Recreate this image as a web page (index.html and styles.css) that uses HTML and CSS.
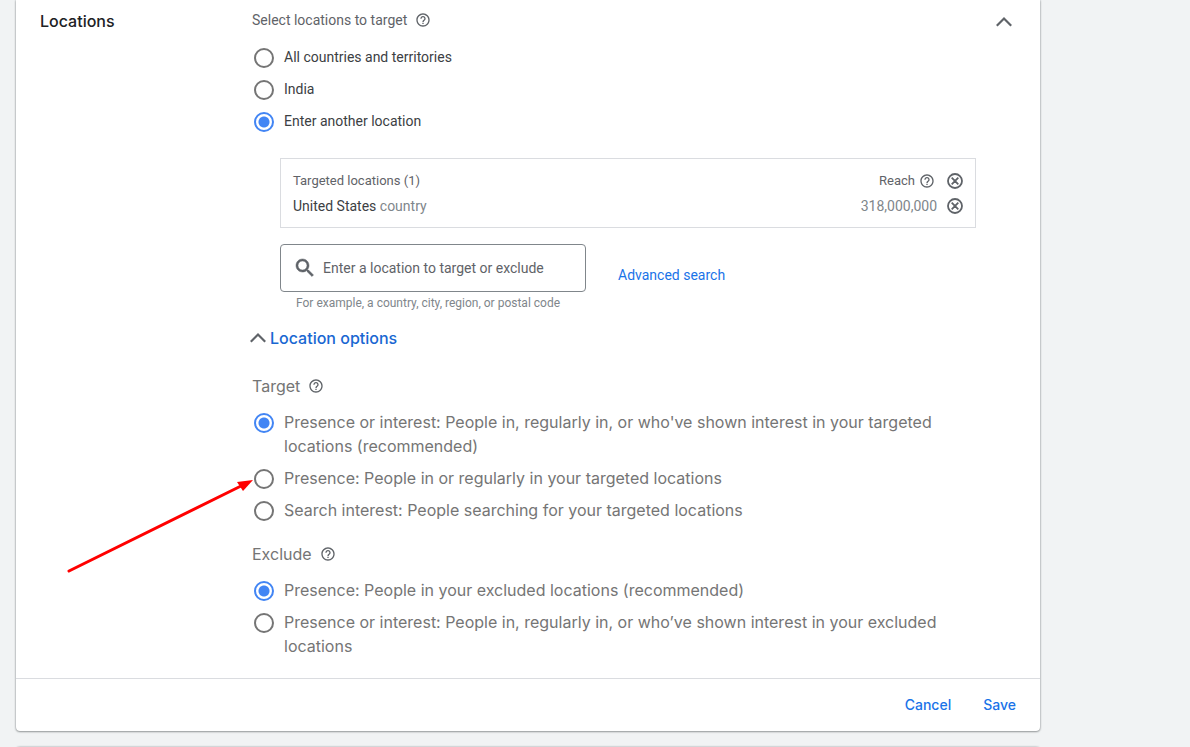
FILE: index.html
```html
<!DOCTYPE html>
<html lang="en">
<head>
<meta charset="utf-8">
<title>Locations</title>
<link rel="stylesheet" href="styles.css">
</head>
<body>
<svg class="sprite" aria-hidden="true">
  <symbol id="help" viewBox="0 0 24 24"><path d="M11 18h2v-2h-2v2zm1-16C6.480 2 2 6.480 2 12s4.480 10 10 10 10-4.480 10-10S17.520 2 12 2zm0 18c-4.410 0-8-3.590-8-8s3.590-8 8-8 8 3.590 8 8-3.590 8-8 8zm0-14c-2.210 0-4 1.790-4 4h2c0-1.100.9-2 2-2s2 .9 2 2c0 2-3 1.750-3 5h2c0-2.250 3-2.500 3-5 0-2.210-1.790-4-4-4z"/></symbol>
  <symbol id="remove" viewBox="0 0 20 20"><path d="M10 3a7 7 0 1 0 0 14a7 7 0 0 0 0-14zM6.700 6.700l6.600 6.600M13.300 6.700l-6.600 6.600" fill="none" stroke="currentColor" stroke-width="1.800"/></symbol>
  <symbol id="chevron" viewBox="0 0 24 24"><path d="M4.800 15.700L12 8.500l7.200 7.200" fill="none" stroke="currentColor" stroke-width="2.200"/></symbol>
  <symbol id="search" viewBox="0 0 24 24"><path d="M15.500 14h-.79l-.28-.27C15.410 12.590 16 11.110 16 9.500 16 5.910 13.090 3 9.500 3S3 5.910 3 9.500 5.910 16 9.500 16c1.610 0 3.090-.59 4.230-1.570l.27.28v.79l5 4.990L20.490 19l-4.990-5zm-6 0C7.010 14 5 11.990 5 9.500S7.010 5 9.500 5 14 7.010 14 9.500 11.990 14 9.500 14z" stroke="currentColor" stroke-width=".5"/></symbol>
</svg>
<main class="page">
  <form class="card">
    <section class="panel">
      <h2 class="panel-title">Locations</h2>
      <div class="panel-body">
        <fieldset class="group">
          <legend class="lead">Select locations to target
            <button type="button" class="icon-button" aria-label="Help"><svg class="help"><use href="#help"/></svg></button>
          </legend>
          <div class="options compact">
            <label class="option"><input type="radio" name="scope"><span>All countries and territories</span></label>
            <label class="option"><input type="radio" name="scope"><span>India</span></label>
            <label class="option"><input type="radio" name="scope" checked><span>Enter another location</span></label>
          </div>
        </fieldset>
        <div class="picker">
          <div class="targeted">
            <table class="locations">
              <thead>
                <tr>
                  <th scope="col">Targeted locations (1)</th>
                  <th scope="col" class="reach"><span class="reach-label">Reach <button type="button" class="icon-button" aria-label="Help"><svg class="help"><use href="#help"/></svg></button></span></th>
                  <th class="action"><button type="button" class="icon-button" aria-label="Remove all"><svg class="remove"><use href="#remove"/></svg></button></th>
                </tr>
              </thead>
              <tbody>
                <tr>
                  <td>United States <span class="muted">country</span></td>
                  <td class="reach muted">318,000,000</td>
                  <td class="action"><button type="button" class="icon-button" aria-label="Remove United States"><svg class="remove"><use href="#remove"/></svg></button></td>
                </tr>
              </tbody>
            </table>
          </div>
          <div class="search-row">
            <div class="search-box">
              <svg class="search-icon" aria-hidden="true"><use href="#search"/></svg>
              <input type="text" class="search-input" aria-label="Location" aria-describedby="hint" placeholder="Enter a location to target or exclude">
            </div>
            <a class="advanced" href="#">Advanced search</a>
          </div>
          <p class="hint" id="hint">For example, a country, city, region, or postal code</p>
        </div>
        <button type="button" class="toggle"><svg class="chevron"><use href="#chevron"/></svg>Location options</button>
        <fieldset class="group">
          <legend class="subhead">Target
            <button type="button" class="icon-button" aria-label="Help"><svg class="help"><use href="#help"/></svg></button>
          </legend>
          <div class="options">
            <label class="option"><input type="radio" name="target" checked><span>Presence or interest: People in, regularly in, or who've shown interest in your targeted locations (recommended)</span></label>
            <label class="option"><input type="radio" name="target"><span>Presence: People in or regularly in your targeted locations</span></label>
            <label class="option"><input type="radio" name="target"><span>Search interest: People searching for your targeted locations</span></label>
          </div>
        </fieldset>
        <fieldset class="group exclude">
          <legend class="subhead">Exclude
            <button type="button" class="icon-button" aria-label="Help"><svg class="help"><use href="#help"/></svg></button>
          </legend>
          <div class="options">
            <label class="option"><input type="radio" name="exclude" checked><span>Presence: People in your excluded locations (recommended)</span></label>
            <label class="option"><input type="radio" name="exclude"><span>Presence or interest: People in, regularly in, or who’ve shown interest in your excluded locations</span></label>
          </div>
        </fieldset>
      </div>
      <button type="button" class="icon-button collapse" aria-label="Collapse"><svg class="chevron"><use href="#chevron"/></svg></button>
    </section>
    <footer class="actions">
      <button type="button" class="text-button">Cancel</button>
      <button type="submit" class="text-button">Save</button>
    </footer>
  </form>
  <div class="card next"></div>
  <svg class="pointer" viewBox="0 0 190 96" aria-hidden="true">
    <path d="M4 93L176 8" stroke="#f00" stroke-width="3" stroke-linecap="round"/>
    <path d="M188 2L172 4L178 13Z" fill="#f00"/>
  </svg>
</main>
</body>
</html>
```

FILE: styles.css
```css
* {
  box-sizing: border-box;
}

body {
  margin: 0;
  background: #f1f3f4;
  color: #3c4043;
  font: 14px/24px Roboto, "Liberation Sans", sans-serif;
}

button {
  padding: 0;
  border: 0;
  background: none;
  color: inherit;
  font: inherit;
  cursor: pointer;
}

svg {
  display: block;
  fill: currentColor;
}

.sprite {
  display: none;
}

.page {
  position: relative;
  height: 100vh;
  overflow: hidden;
  padding: 0 150px 0 16px;
}

.card {
  background: #fff;
  border-radius: 0 0 4px 4px;
  box-shadow: 0 1px 2px rgba(60, 64, 67, 0.4), 0 0 2px rgba(60, 64, 67, 0.5);
}

.next {
  height: 40px;
  margin-top: 16px;
  border-radius: 4px;
}

.panel {
  display: grid;
  grid-template-columns: 212px 1fr 24px;
  padding: 8px 24px 20px;
}

.panel-title {
  margin: 1px 0 0;
  color: #202124;
  font: 500 16px/24px Inter, sans-serif;
}

.panel-body {
  margin-right: 16px;
}

.collapse {
  align-self: start;
  margin-top: 2px;
}

.chevron {
  width: 24px;
  height: 24px;
  color: #5f6368;
}

.icon-button {
  display: inline-flex;
  color: #5f6368;
}

.help {
  width: 16px;
  height: 16px;
}

.remove {
  width: 20px;
  height: 20px;
}

.group {
  margin: 0;
  padding: 0;
  border: 0;
}

.lead,
.subhead {
  display: flex;
  align-items: center;
  gap: 8px;
  padding: 0;
  color: #5f6368;
}

.subhead {
  color: #757575;
  font: 16px/24px Inter, sans-serif;
}

.options {
  display: grid;
  gap: 8px;
  padding: 12px 0 0 2px;
  color: #757575;
  font: 16px/24px Inter, sans-serif;
}

.options.compact {
  padding-top: 13px;
  color: #3c4043;
  font: 14px/24px Roboto, sans-serif;
}

.option {
  display: flex;
  gap: 10px;
}

.option input {
  appearance: none;
  flex: none;
  width: 20px;
  height: 20px;
  margin: 3px 0 0;
  border: 2px solid #757575;
  border-radius: 50%;
}

.option input:checked {
  border-color: #4285f4;
  background: radial-gradient(circle, #4285f4 5px, transparent 6px);
}

.picker {
  padding: 25px 0 0 28px;
}

.targeted {
  padding: 9px 10px 9px 12px;
  border: 1px solid #dadce0;
}

.locations {
  width: 100%;
  border-collapse: collapse;
}

.locations th,
.locations td {
  height: 25px;
  padding: 0;
  text-align: left;
  vertical-align: middle;
}

.locations th {
  color: #5f6368;
  font-size: 13px;
  font-weight: 400;
}

.locations .reach {
  text-align: right;
}

.locations .action {
  width: 28px;
}

.locations .action .icon-button {
  display: flex;
  margin-left: auto;
}

.reach-label {
  display: inline-flex;
  align-items: center;
  gap: 4px;
  padding-right: 2px;
}

.locations .muted {
  color: #80868b;
}

.search-row {
  display: flex;
  align-items: center;
  gap: 32px;
  margin-top: 16px;
}

.search-box {
  display: flex;
  align-items: center;
  gap: 6px;
  width: 306px;
  height: 48px;
  padding: 0 12px;
  border: 1px solid #80868b;
  border-radius: 4px;
}

.search-icon {
  flex: none;
  width: 24px;
  height: 24px;
  color: #5f6368;
}

.search-input {
  flex: 1;
  min-width: 0;
  padding: 0;
  border: 0;
  outline: 0;
  background: none;
  font: 14px/24px Roboto, sans-serif;
}

.search-input::placeholder {
  color: #5f6368;
  opacity: 1;
}

.advanced {
  padding-top: 14px;
  color: #1a73e8;
  text-decoration: none;
}

.hint {
  margin: 0 0 12px 16px;
  color: #80868b;
  font-size: 12px;
  line-height: 22px;
}

.toggle {
  display: flex;
  align-items: center;
  margin: 0 0 24px -6px;
  color: #1967d2;
  font: 500 16px/24px Inter, sans-serif;
}

.exclude {
  margin-top: 20px;
}

.actions {
  display: flex;
  justify-content: flex-end;
  gap: 32px;
  padding: 14px 24px;
  border-top: 1px solid #dadce0;
}

.text-button {
  color: #1a73e8;
  font: 500 14px/24px Inter, sans-serif;
}

.pointer {
  position: absolute;
  top: 478px;
  left: 65px;
  width: 190px;
  height: 96px;
}
```
